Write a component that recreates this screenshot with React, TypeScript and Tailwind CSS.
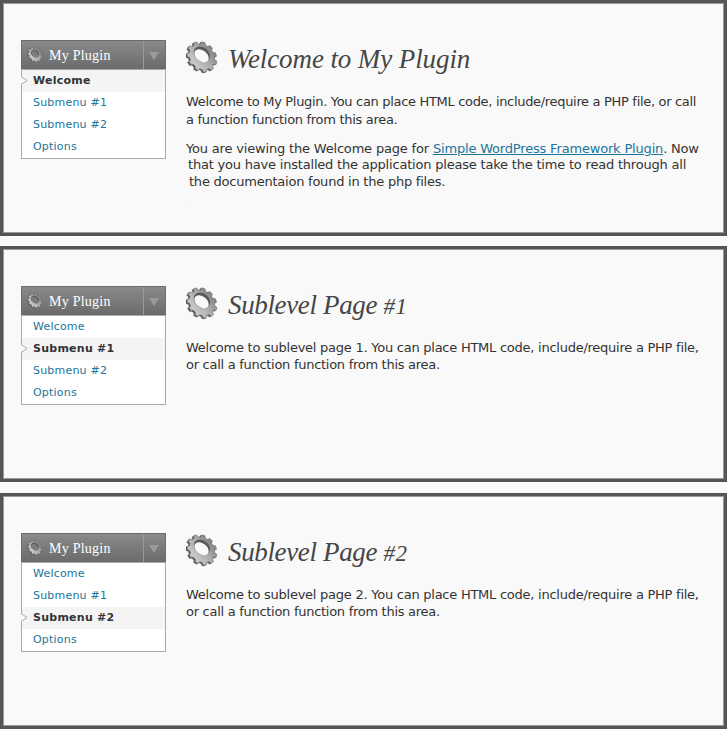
import React from 'react';

const SANS = "font-['DejaVu_Sans','Verdana',sans-serif]";
const SERIF = "font-['Liberation_Serif','Georgia',serif]";

// Toothed rim as seen tilted away toward the upper right.
function rim(cx: number, cy: number, rx: number, ry: number, teeth: number) {
  const pts: string[] = [];
  const tilt = Math.PI / 3.8;
  const profile: [number, number][] = [
    [0, 0.85],
    [0.36, 0.85],
    [0.48, 1],
    [0.88, 1],
  ];
  for (let i = 0; i < teeth; i++) {
    for (const [t, r] of profile) {
      const a = ((i + t) / teeth) * Math.PI * 2 + 0.25;
      const x = Math.cos(a) * rx * r;
      const y = Math.sin(a) * ry * r;
      pts.push(
        (cx + x * Math.cos(tilt) - y * Math.sin(tilt)).toFixed(2) +
          ' ' +
          (cy + x * Math.sin(tilt) + y * Math.cos(tilt)).toFixed(2),
      );
    }
  }
  return 'M' + pts.join('L') + 'Z';
}

const BACK = rim(14.6, 16.6, 16.4, 13.6, 11);
const FRONT = rim(16, 15.8, 16.4, 13.6, 11);

function Gear({ id, className, hole }: { id: string; className: string; hole: string }) {
  return (
    <svg className={className} viewBox="0 0 32 33" aria-hidden="true">
      <defs>
        <linearGradient id={id} x1="0" y1="0.9" x2="0.9" y2="0.2">
          <stop offset="0" stopColor="#858585" />
          <stop offset="0.25" stopColor="#c8c8c8" />
          <stop offset="0.6" stopColor="#acacac" />
          <stop offset="1" stopColor="#7c7c7c" />
        </linearGradient>
      </defs>
      <path d={BACK} fill="#555" stroke="#555" strokeWidth="0.4" strokeLinejoin="round" />
      <path d={FRONT} fill={`url(#${id})`} stroke="#686868" strokeWidth="0.6" strokeLinejoin="round" />
      <ellipse cx="15.9" cy="13.2" rx="9" ry="6.9" transform="rotate(38 15.9 13.2)" fill="#5a5a5a" />
      <ellipse cx="15.5" cy="14.8" rx="8.1" ry="5.4" transform="rotate(38 15.5 14.8)" fill={hole} />
    </svg>
  );
}

const ITEMS = ['Welcome', 'Submenu #1', 'Submenu #2', 'Options'];

function Menu({ active, id }: { active: number; id: string }) {
  return (
    <nav className="w-[145px] shrink-0">
      <div className="flex h-[29px] border border-b-0 border-[#6d6d6d] bg-linear-to-b from-[#8a8a8a] to-[#6b6b6b]">
        <div className="flex w-[121px] items-center pl-[5px]">
          <Gear id={id} className="h-4 w-4" hole="#7c7c7c" />
          <span className={`${SERIF} ml-[6px] pt-px text-[14px] leading-[28px] tracking-[0.25px] whitespace-nowrap text-white`}>
            My Plugin
          </span>
        </div>
        <div className="flex flex-1 items-center justify-center border-l border-[#999]">
          <svg className="mt-[2px] mr-px h-[8px] w-[10px]" viewBox="0 0 10 8">
            <path d="M0 0H10L5 8Z" fill="#9b9b9b" />
          </svg>
        </div>
      </div>
      <ul className="h-[90px] border border-[#aaa] bg-white">
        {ITEMS.map((item, i) => (
          <li
            key={item}
            className={`${SANS} relative h-[22px] pl-[11px] text-[11px] leading-[22px] whitespace-nowrap ${
              i === active ? 'bg-[#f4f4f4] font-bold tracking-[0.25px] text-[#333]' : 'tracking-[0.2px] text-[#21759b]'
            }`}
          >
            {item}
            {i === active && (
              <svg className="absolute top-[6px] -left-px h-[9px] w-[7px]" viewBox="0 0 7 9">
                <path d="M0 0.5L6 4.5L0 8.5Z" fill="#f9f9f9" />
                <path d="M0 0.5L6 4.5L0 8.5" fill="none" stroke="#aaa" />
              </svg>
            )}
          </li>
        ))}
      </ul>
    </nav>
  );
}

function Panel({
  active,
  id,
  title,
  children,
}: {
  active: number;
  id: string;
  title: React.ReactNode;
  children: React.ReactNode;
}) {
  return (
    <section className="h-[236px] border-[3px] border-[#555]">
      <div className="flex h-full border border-[#999] bg-[#f9f9f9] pt-[36px] pl-[17px]">
        <Menu active={active} id={`${id}-menu`} />
        <main className="ml-[20px]">
          <div className="flex h-[39px] items-start">
            <Gear id={`${id}-title`} className="mt-px h-[33px] w-8 shrink-0" hole="#f9f9f9" />
            <h1 className={`${SERIF} ml-[10px] text-[27px] leading-[38px] whitespace-nowrap text-[#464646] italic`}>
              {title}
            </h1>
          </div>
          <div className={`${SANS} text-[13px] whitespace-nowrap text-[#333]`}>{children}</div>
        </main>
      </div>
    </section>
  );
}

function SubPage({ n }: { n: number }) {
  return (
    <>
      <p className="mt-[14px] leading-[17px] tracking-[-0.25px]">
        Welcome to sublevel page {n}. You can place HTML code, include/require a PHP file,
      </p>
      <p className="leading-[17px] tracking-[-0.28px]">or call a function function from this area.</p>
    </>
  );
}

function SubTitle({ n }: { n: number }) {
  return (
    <span className="tracking-[-0.35px]">
      Sublevel Page <span className="text-[23px] tracking-[0.5px]">#{n}</span>
    </span>
  );
}

export default function App() {
  return (
    <div className="h-[729px] w-[727px] overflow-hidden bg-[#f9f9f9]">
      <Panel active={0} id="welcome" title={<span className="tracking-[-0.1px]">Welcome to My Plugin</span>}>
        <p className="mt-[14px] leading-[17px] tracking-[-0.32px]">
          Welcome to My Plugin. You can place HTML code, include/require a PHP file, or call
        </p>
        <p className="leading-[19px] tracking-[-0.3px]">a function function from this area.</p>
        <p className="mt-[11px] leading-[17px] tracking-[-0.18px]">
          You are viewing the Welcome page for{' '}
          <a className="text-[#21759b] underline">Simple WordPress Framework Plugin</a>. Now
        </p>
        <p className="pl-[2px] leading-[16px] tracking-[-0.2px]">
          that you have installed the application please take the time to read through all
        </p>
        <p className="pl-[3px] leading-[17px] tracking-[-0.23px]">the documentaion found in the php files.</p>
        <div className="mt-[14px] h-px w-px bg-[#f3e08a]" />
      </Panel>
      <div className="h-[10px]" />
      <Panel active={1} id="first" title={<SubTitle n={1} />}>
        <SubPage n={1} />
      </Panel>
      <div className="h-[11px]" />
      <Panel active={2} id="second" title={<SubTitle n={2} />}>
        <SubPage n={2} />
      </Panel>
    </div>
  );
}
